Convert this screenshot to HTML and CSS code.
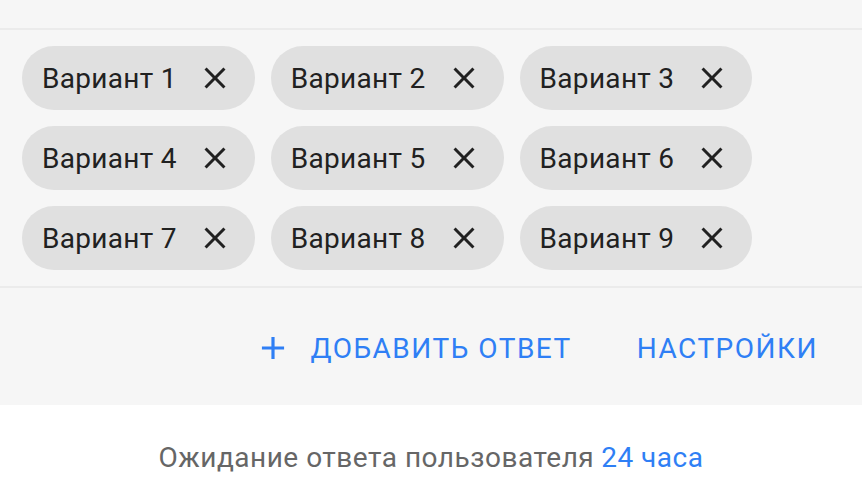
FILE: index.html
```html
<!DOCTYPE html>
<html lang="ru">
<head>
<meta charset="utf-8">
<link rel="stylesheet" href="styles.css">
</head>
<body>
<div class="panel">
  <div class="divider"></div>
  <div class="chips">
    <div class="chip"><span class="label">Вариант 1</span><span class="close"><svg viewBox="0 0 24 24"><path d="M19 6.41 17.59 5 12 10.59 6.41 5 5 6.41 10.59 12 5 17.59 6.41 19 12 13.41 17.59 19 19 17.59 13.41 12z"/></svg></span></div>
    <div class="chip"><span class="label">Вариант 2</span><span class="close"><svg viewBox="0 0 24 24"><path d="M19 6.41 17.59 5 12 10.59 6.41 5 5 6.41 10.59 12 5 17.59 6.41 19 12 13.41 17.59 19 19 17.59 13.41 12z"/></svg></span></div>
    <div class="chip"><span class="label">Вариант 3</span><span class="close"><svg viewBox="0 0 24 24"><path d="M19 6.41 17.59 5 12 10.59 6.41 5 5 6.41 10.59 12 5 17.59 6.41 19 12 13.41 17.59 19 19 17.59 13.41 12z"/></svg></span></div>
    <div class="chip"><span class="label">Вариант 4</span><span class="close"><svg viewBox="0 0 24 24"><path d="M19 6.41 17.59 5 12 10.59 6.41 5 5 6.41 10.59 12 5 17.59 6.41 19 12 13.41 17.59 19 19 17.59 13.41 12z"/></svg></span></div>
    <div class="chip"><span class="label">Вариант 5</span><span class="close"><svg viewBox="0 0 24 24"><path d="M19 6.41 17.59 5 12 10.59 6.41 5 5 6.41 10.59 12 5 17.59 6.41 19 12 13.41 17.59 19 19 17.59 13.41 12z"/></svg></span></div>
    <div class="chip"><span class="label">Вариант 6</span><span class="close"><svg viewBox="0 0 24 24"><path d="M19 6.41 17.59 5 12 10.59 6.41 5 5 6.41 10.59 12 5 17.59 6.41 19 12 13.41 17.59 19 19 17.59 13.41 12z"/></svg></span></div>
    <div class="chip"><span class="label">Вариант 7</span><span class="close"><svg viewBox="0 0 24 24"><path d="M19 6.41 17.59 5 12 10.59 6.41 5 5 6.41 10.59 12 5 17.59 6.41 19 12 13.41 17.59 19 19 17.59 13.41 12z"/></svg></span></div>
    <div class="chip"><span class="label">Вариант 8</span><span class="close"><svg viewBox="0 0 24 24"><path d="M19 6.41 17.59 5 12 10.59 6.41 5 5 6.41 10.59 12 5 17.59 6.41 19 12 13.41 17.59 19 19 17.59 13.41 12z"/></svg></span></div>
    <div class="chip"><span class="label">Вариант 9</span><span class="close"><svg viewBox="0 0 24 24"><path d="M19 6.41 17.59 5 12 10.59 6.41 5 5 6.41 10.59 12 5 17.59 6.41 19 12 13.41 17.59 19 19 17.59 13.41 12z"/></svg></span></div>
  </div>
  <div class="divider"></div>
  <div class="actions">
    <button class="btn"><svg class="plus" viewBox="0 0 24 24"><path d="M19 13h-6v6h-2v-6H5v-2h6V5h2v6h6v2z"/></svg>Добавить ответ</button>
    <button class="btn">Настройки</button>
  </div>
</div>
<div class="footer">Ожидание ответа пользователя <span class="accent">24 часа</span></div>
</body>
</html>
```

FILE: styles.css
```css
* { box-sizing: border-box; }
body {
  margin: 0;
  background: #ffffff;
  font-family: Roboto, "Liberation Sans", sans-serif;
}
.panel {
  background: #f6f6f6;
  padding-top: 28px;
}
.divider {
  height: 2px;
  background: #ebebeb;
}
.chips {
  display: grid;
  grid-template-columns: repeat(3, auto);
  justify-content: start;
  gap: 16px 16px;
  padding: 16px 22px;
}
.chip {
  display: flex;
  align-items: center;
  height: 64px;
  border-radius: 32px;
  background: #e0e0e0;
  padding: 0 22px 0 20px;
  color: #212121;
  font-size: 28px;
  letter-spacing: 0.3px;
}
.label {
  white-space: nowrap;
}
.close {
  display: flex;
  width: 36px;
  height: 36px;
  margin-left: 20px;
}
.close svg {
  width: 36px;
  height: 36px;
  fill: #212121;
}
.actions {
  display: flex;
  justify-content: flex-end;
  gap: 33px;
  padding: 24px 28px 21px;
}
.btn {
  display: flex;
  align-items: center;
  height: 72px;
  padding: 0 16px;
  border: 0;
  background: transparent;
  color: #2f7ff5;
  font-family: Roboto, "Liberation Sans", sans-serif;
  font-size: 28px;
  font-weight: 400;
  letter-spacing: 1.5px;
  text-transform: uppercase;
}
.plus {
  width: 38px;
  height: 38px;
  fill: #2f7ff5;
  margin-right: 18px;
  margin-left: -8px;
}
.footer {
  display: flex;
  justify-content: center;
  align-items: center;
  height: 87px;
  padding-top: 18px;
  color: #666666;
  font-size: 28px;
  letter-spacing: 0.5px;
}
.accent {
  color: #2f7ff5;
  margin-left: 0.25em;
}
```
